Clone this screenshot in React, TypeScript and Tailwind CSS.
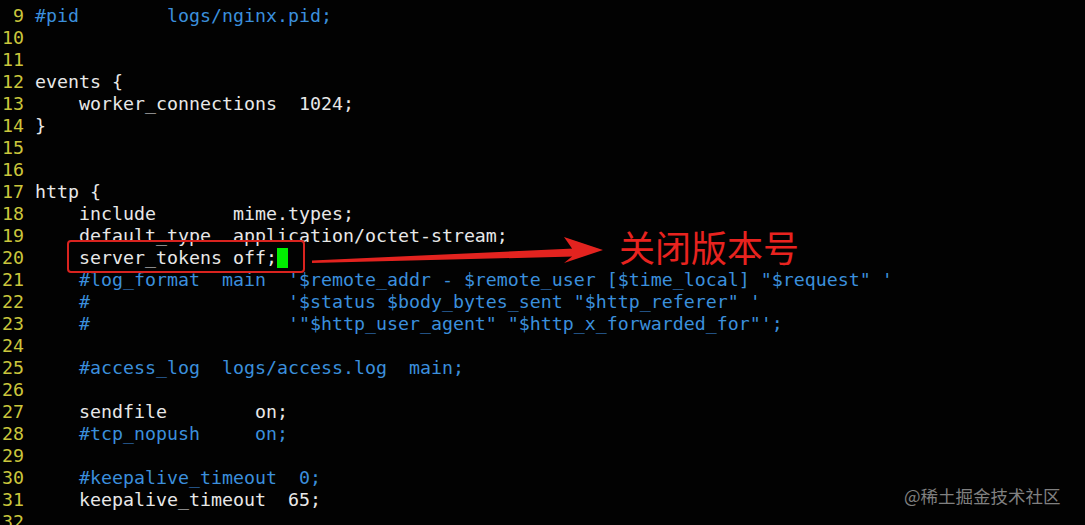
import React from "react";

type Seg = { t: string; c: "w" | "b" };
const lines: { n: number; segs: Seg[]; cursor?: boolean }[] = [
  { n: 9, segs: [{ t: "#pid        logs/nginx.pid;", c: "b" }] },
  { n: 10, segs: [] },
  { n: 11, segs: [] },
  { n: 12, segs: [{ t: "events {", c: "w" }] },
  { n: 13, segs: [{ t: "    worker_connections  1024;", c: "w" }] },
  { n: 14, segs: [{ t: "}", c: "w" }] },
  { n: 15, segs: [] },
  { n: 16, segs: [] },
  { n: 17, segs: [{ t: "http {", c: "w" }] },
  { n: 18, segs: [{ t: "    include       mime.types;", c: "w" }] },
  { n: 19, segs: [{ t: "    default_type  application/octet-stream;", c: "w" }] },
  { n: 20, segs: [{ t: "    server_tokens off;", c: "w" }], cursor: true },
  { n: 21, segs: [{ t: "    #log_format  main  '$remote_addr - $remote_user [$time_local] \"$request\" '", c: "b" }] },
  { n: 22, segs: [{ t: "    #                  '$status $body_bytes_sent \"$http_referer\" '", c: "b" }] },
  { n: 23, segs: [{ t: "    #                  '\"$http_user_agent\" \"$http_x_forwarded_for\"';", c: "b" }] },
  { n: 24, segs: [] },
  { n: 25, segs: [{ t: "    #access_log  logs/access.log  main;", c: "b" }] },
  { n: 26, segs: [] },
  { n: 27, segs: [{ t: "    sendfile        on;", c: "w" }] },
  { n: 28, segs: [{ t: "    #tcp_nopush     on;", c: "b" }] },
  { n: 29, segs: [] },
  { n: 30, segs: [{ t: "    #keepalive_timeout  0;", c: "b" }] },
  { n: 31, segs: [{ t: "    keepalive_timeout  65;", c: "w" }] },
  { n: 32, segs: [] },
];

export default function App() {
  return (
    <div className="relative w-[1085px] h-[525px] overflow-hidden bg-[#020202]">
      <div
        className="pt-[5px] pl-[2px] text-[18.27px] leading-[22px] whitespace-pre"
        style={{ fontFamily: '"DejaVu Sans Mono", "Liberation Mono", monospace' }}
      >
        {lines.map((l) => (
          <div key={l.n} className="flex h-[22px]">
            <span className="text-[#cbc63c]">{String(l.n).padStart(2, " ") + " "}</span>
            {l.segs.map((s, i) => (
              <span key={i} className={s.c === "w" ? "text-[#e8e8e8]" : "text-[#3b8fdc]"}>
                {s.t}
              </span>
            ))}
            {l.cursor && <span className="inline-block w-[11px] h-[20px] mt-[1px] bg-[#00ee00]" />}
          </div>
        ))}
      </div>

      {/* red highlight box */}
      <div className="absolute left-[67px] top-[240px] w-[238px] h-[33px] border-2 border-[#d9231f] rounded-[4px]" />

      {/* arrow */}
      <svg className="absolute left-0 top-0" width="1085" height="525" viewBox="0 0 1085 525">
        <polygon points="312,260.5 574,248.5 574,256.5 312,263" fill="#e3231f" />
        <polygon points="572,248.5 564,237 603,250 564,263 572,256.5" fill="#e3231f" />
      </svg>

      {/* annotation text */}
      <div
        className="absolute left-[619px] top-[224px] text-[36px] leading-[44px] text-[#e8231f]"
        style={{ fontFamily: '"Noto Sans CJK SC", sans-serif' }}
      >
        关闭版本号
      </div>

      {/* watermark */}
      <div
        className="absolute left-[904px] top-[485px] text-[17.5px] leading-[22px] text-[#808080]"
        style={{ fontFamily: '"Noto Sans CJK SC", sans-serif' }}
      >
        @稀土掘金技术社区
      </div>
    </div>
  );
}
